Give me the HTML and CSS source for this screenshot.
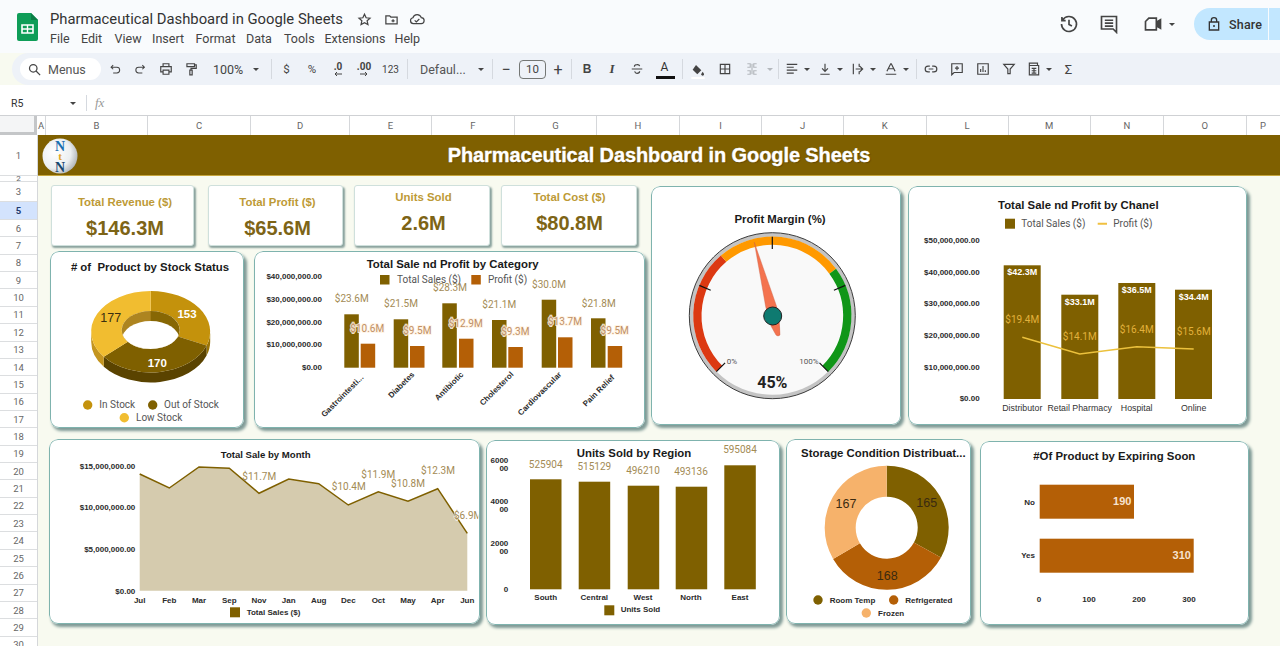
FILE: index.html
```html
<!DOCTYPE html>
<html lang="en">
<head>
<meta charset="utf-8">
<title>Pharmaceutical Dashboard in Google Sheets</title>
<link rel="stylesheet" href="styles.css">
</head>
<body>
<div class="app">
  <header class="topbar">
    <svg class="logo" viewBox="0 0 21 28"><path d="M2 0h12l7 7v19a2 2 0 0 1-2 2H2a2 2 0 0 1-2-2V2a2 2 0 0 1 2-2z" fill="#0f9d58"/><path d="M14 0l7 7h-7z" fill="#0b7d46"/><path d="M5 12h11v8H5z" fill="none" stroke="#fff" stroke-width="1.6"/><path d="M5 16h11M10.5 12v8" stroke="#fff" stroke-width="1.4"/></svg>
    <div class="docinfo">
      <div class="docline">
        <span class="doctitle">Pharmaceutical Dashboard in Google Sheets</span>
        <svg class="ico star" viewBox="0 0 24 24"><path d="M12 3.5l2.6 5.7 6.2.7-4.6 4.2 1.3 6.1L12 17.1l-5.5 3.1 1.3-6.1-4.6-4.2 6.2-.7z" fill="none" stroke="#444" stroke-width="2"/></svg>
        <svg class="ico move" viewBox="0 0 24 24"><path d="M3 6h6l2 2h10v11H3z M12 14h5M14.500 11.500v5" fill="none" stroke="#444" stroke-width="2"/></svg>
        <svg class="ico cloud" viewBox="0 0 24 24"><path d="M6.500 19a4.500 4.500 0 0 1-.6-8.900A6.500 6.500 0 0 1 18.400 10a4.500 4.500 0 0 1-.4 9z M8.500 14l2.500 2.500 4.500-4.500" fill="none" stroke="#444" stroke-width="1.800"/></svg>
      </div>
      <nav class="menu"><span class="m-file">File</span><span class="m-edit">Edit</span><span class="m-view">View</span><span class="m-insert">Insert</span><span class="m-format">Format</span><span class="m-data">Data</span><span class="m-tools">Tools</span><span class="m-ext">Extensions</span><span>Help</span></nav>
    </div>
    <div class="actions">
      <svg class="ico-lg hist" viewBox="0 0 24 24"><path d="M4.500 7A9 9 0 1 1 3 12 M3.500 3.500V8H8 M12 7v5.500l3.500 2" fill="none" stroke="#444" stroke-width="2"/></svg>
      <svg class="ico-lg cmt" viewBox="0 0 24 24"><path d="M3 3h18v19l-4-4H3z M7 7.500h10M7 11h10M7 14.500h10" fill="none" stroke="#444" stroke-width="2"/></svg>
      <svg class="ico-lg cam" viewBox="0 0 24 24"><path d="M7 5h9v14H3V9z M16 10l5-3v10l-5-3" fill="none" stroke="#444" stroke-width="2"/><path d="M16 10l5-3v10l-5-3z" fill="#444"/></svg>
      <i class="caret cam-caret"></i>
      <div class="share">
        <svg class="lock" viewBox="0 0 24 24"><path d="M5 9h14v12H5z M8 9V6.500a4 4 0 0 1 8 0V9" fill="none" stroke="#333" stroke-width="2"/><circle cx="12" cy="15" r="1.500" fill="#333"/></svg>
        <span>Share</span>
      </div>
      <div class="share-more"></div>
    </div>
  </header>

  <div class="toolbar">
    <div class="search">
      <svg class="ico" viewBox="0 0 24 24"><circle cx="10" cy="10" r="6" fill="none" stroke="#444" stroke-width="2"/><path d="M14.500 14.500L21 21" stroke="#444" stroke-width="2"/></svg>
      <span>Menus</span>
    </div>
    <span class="ti"><svg class="ico sm" viewBox="0 0 24 24"><path d="M4 8h11a5 5 0 0 1 0 11H8 M8 4L4 8l4 4" fill="none" stroke="#444" stroke-width="2"/></svg></span>
    <span class="ti"><svg class="ico sm" viewBox="0 0 24 24"><path d="M20 8H9a5 5 0 0 0 0 11h7 M16 4l4 4-4 4" fill="none" stroke="#444" stroke-width="2"/></svg></span>
    <span class="ti"><svg class="ico" viewBox="0 0 24 24"><path d="M7 8V3h10v5 M7 17H3V8h18v9h-4 M7 14h10v7H7z" fill="none" stroke="#444" stroke-width="2"/></svg></span>
    <span class="ti"><svg class="ico" viewBox="0 0 24 24"><path d="M5 3h13v5H5z M18 5h3v6h-9v3 M10 14h4v8h-4z" fill="none" stroke="#444" stroke-width="2"/></svg></span>
    <span class="zoomsel">100%<i class="caret"></i></span>
    <i class="sep"></i>
    <span class="ti t-txt w25">$</span>
    <span class="ti t-txt w26">%</span>
    <span class="ti t-txt w26 t-dec">.0<svg viewBox="0 0 10 6"><path d="M9 3H2M4 1L2 3l2 2" fill="none" stroke="#444" stroke-width="1"/></svg></span>
    <span class="ti t-txt w26 t-dec">.00<svg viewBox="0 0 10 6"><path d="M1 3h7M6 1l2 2-2 2" fill="none" stroke="#444" stroke-width="1"/></svg></span>
    <span class="ti t-txt w27 t-123">123</span>
    <i class="sep s3"></i>
    <span class="fontsel">Defaul...<i class="caret"></i></span>
    <i class="sep s0"></i>
    <span class="ti w26 t-pm">−</span>
    <span class="sizebox">10</span>
    <span class="ti w24 t-pm">+</span>
    <i class="sep s1"></i>
    <span class="ti t-b">B</span>
    <span class="ti t-i">I</span>
    <span class="ti"><svg class="ico" viewBox="0 0 24 24"><path d="M3 12h18 M16.500 7a4 3 0 0 0-4.500-2.500C9 4.500 7.500 6 7.500 8 M8 16c.500 2 2 3.500 4 3.500 2.500 0 4.500-1.500 4.500-3.500" fill="none" stroke="#444" stroke-width="2"/></svg></span>
    <span class="ti w30 t-color">A<i class="bar"></i></span>
    <i class="sep s2"></i>
    <span class="ti w30"><svg class="ico fillc" viewBox="0 0 24 24"><path d="M9 3l8 8-6 6-7-7z" fill="#444"/><path d="M19 13c1.500 2 2 3 2 4a2 2 0 0 1-4 0c0-1 .500-2 2-4z" fill="#444"/><path d="M2 22.500h20" stroke="#fff" stroke-width="3"/></svg></span>
    <span class="ti w25h"><svg class="ico" viewBox="0 0 24 24"><path d="M4 4h16v16H4z M12 4v16M4 12h16" fill="none" stroke="#444" stroke-width="2"/></svg></span>
    <span class="ti w27"><svg class="ico" viewBox="0 0 24 24"><path d="M4 3h5v6H4 M20 3h-5v6h5 M4 21h5v-6H4 M20 21h-5v-6h5 M12 3v18" fill="none" stroke="#b4b8bd" stroke-width="2"/></svg></span>
    <span class="ti w9"><i class="caret light"></i></span>
    <i class="sep s4"></i>
    <span class="ddi"><svg class="ico" viewBox="0 0 24 24"><path d="M3 4h18M3 9h12M3 14h18M3 19h12" stroke="#444" stroke-width="2"/></svg><i class="caret"></i></span>
    <span class="ddi"><svg class="ico" viewBox="0 0 24 24"><path d="M12 3v13M7 11l5 5 5-5 M4 21h16" fill="none" stroke="#444" stroke-width="2"/></svg><i class="caret"></i></span>
    <span class="ddi"><svg class="ico" viewBox="0 0 24 24"><path d="M4 3v18 M8 12h12M15 7l5 5-5 5 M14 3v5M14 16v5" fill="none" stroke="#444" stroke-width="2"/></svg><i class="caret"></i></span>
    <span class="ddi"><svg class="ico" viewBox="0 0 24 24"><path d="M5 16L11.500 3h1L19 16 M7.500 11.500h9 M3 21h18" fill="none" stroke="#444" stroke-width="2"/></svg><i class="caret"></i></span>
    <i class="sep s5"></i>
    <span class="ti w28"><svg class="ico" viewBox="0 0 24 24"><path d="M10 7H7a5 5 0 0 0 0 10h3 M14 7h3a5 5 0 0 1 0 10h-3 M8 12h8" fill="none" stroke="#444" stroke-width="2"/></svg></span>
    <span class="ti"><svg class="ico" viewBox="0 0 24 24"><path d="M3 3h18v15H7l-4 4z M12 7v7M8.500 10.500h7" fill="none" stroke="#444" stroke-width="2"/></svg></span>
    <span class="ti w27"><svg class="ico" viewBox="0 0 24 24"><path d="M3 3h18v18H3z M8 17v-5M12 17V7M16 17v-3" fill="none" stroke="#444" stroke-width="2"/></svg></span>
    <span class="ti"><svg class="ico" viewBox="0 0 24 24"><path d="M3 4h18l-7 8v8h-4v-8z" fill="none" stroke="#444" stroke-width="2"/></svg></span>
    <span class="ddi fn"><svg class="ico" viewBox="0 0 24 24"><path d="M4 6V2h14v4 M4 6h16v16H4z M8 11h8M8 15h8M8 19h8M12 11v8" fill="none" stroke="#444" stroke-width="2"/></svg><i class="caret"></i></span>
    <span class="ti w26 t-sigma">Σ</span>
  </div>

  <div class="formula">
    <span class="cellref">R5</span><i class="caret"></i><i class="sep fsep"></i><span class="fx">fx</span>
  </div>

  <div class="colheads">
    <span class="corner"></span>
    <span class="c-a">A</span><span class="c-b">B</span><span class="c-c">C</span><span class="c-d">D</span><span class="c-e">E</span><span class="c-f">F</span><span class="c-g">G</span><span class="c-h">H</span><span class="c-i">I</span><span class="c-j">J</span><span class="c-k">K</span><span class="c-l">L</span><span class="c-m">M</span><span class="c-n">N</span><span class="c-o">O</span><span class="c-p">P</span>
  </div>

  <div class="sheet">
    <div class="rowheads">
      <span class="r1">1</span><span class="r2">2</span><span class="r3">3</span><span class="r5">5</span><span>6</span><span>7</span><span>8</span><span>9</span><span>10</span><span>11</span><span>12</span><span>13</span><span>14</span><span>15</span><span>16</span><span>17</span><span>18</span><span>19</span><span>20</span><span>21</span><span>22</span><span>23</span><span>24</span><span>25</span><span>26</span><span>27</span><span>28</span><span>29</span><span>30</span>
    </div>
    <main class="canvas">
      <div class="band">
        <svg class="ntn" viewBox="0 0 36 36">
          <defs><radialGradient id="ball" cx="35%" cy="40%" r="75%"><stop offset="0" stop-color="#fff"/><stop offset="0.6" stop-color="#eceff1"/><stop offset="1" stop-color="#9ea3a8"/></radialGradient></defs>
          <circle cx="18" cy="18" r="17.500" fill="url(#ball)"/>
          <text class="ntn-n" x="18" y="12.500">N</text><text class="ntn-t" x="18" y="22">t</text><text class="ntn-b" x="18" y="34">N</text>
        </svg>
        <h1>Pharmaceutical Dashboard in Google Sheets</h1>
      </div>

      <div class="top-row">
        <div class="left-block">
          <div class="kpis">
            <div class="kpi kpi-1"><span class="kpi-label">Total Revenue ($)</span><span class="kpi-value">$146.3M</span></div>
            <div class="kpi kpi-2"><span class="kpi-label">Total Profit ($)</span><span class="kpi-value">$65.6M</span></div>
            <div class="kpi kpi-3 high"><span class="kpi-label">Units Sold</span><span class="kpi-value">2.6M</span></div>
            <div class="kpi kpi-4 high"><span class="kpi-label">Total Cost ($)</span><span class="kpi-value">$80.8M</span></div>
          </div>
          <div class="chart-row">
            <section class="card stock">
              <svg viewBox="0 0 194 177">
                <text class="title t12 mid" x="100" y="20"># of  Product by Stock Status</text>
                <path d="M160.200 80.700V90.700A59.500 40.700 0 0 1 156.600 104.600V94.600A59.500 40.700 0 0 0 160.200 80.700Z" fill="#9a7406"/>
                <path d="M156.600 94.600V104.600A59.500 40.700 0 0 1 53.800 115.760V105.760A59.500 40.700 0 0 0 156.600 94.600Z" fill="#5a4300"/>
                <path d="M53.800 105.760V115.760A59.500 40.700 0 0 1 41.200 90.700V80.700A59.500 40.700 0 0 0 53.800 105.760Z" fill="#c4951f"/>
                <path d="M100.700 40A59.500 40.700 0 0 1 156.600 94.600L127.950 85.500A29 19 0 0 0 100.700 60Z" fill="#c4920c"/>
                <path d="M156.600 94.600A59.500 40.700 0 0 1 53.800 105.760L77.850 90.700A29 19 0 0 0 127.950 85.500Z" fill="#7f6000"/>
                <path d="M53.800 105.760A59.500 40.700 0 0 1 100.700 40L100.700 60A29 19 0 0 0 77.850 90.700Z" fill="#f1bd30"/>
                <defs><clipPath id="hole"><ellipse cx="100.700" cy="79" rx="29" ry="19"/></clipPath></defs>
                <g clip-path="url(#hole)">
                  <rect x="71" y="60" width="30" height="40" fill="#ad8420"/>
                  <rect x="100.700" y="60" width="30" height="40" fill="#876704"/>
                  <ellipse cx="100.700" cy="89" rx="29" ry="19" fill="#fff"/>
                </g>
                <text class="pie-l white mid" x="137" y="67">153</text>
                <text class="pie-l dark mid" x="60.700" y="71">177</text>
                <text class="pie-l white mid" x="107.300" y="116">170</text>
                <circle cx="37.700" cy="154" r="4.700" fill="#c4920c"/><text class="leg" x="49.300" y="157">In Stock</text>
                <circle cx="102.700" cy="154" r="4.700" fill="#7f6000"/><text class="leg" x="114" y="157">Out of Stock</text>
                <circle cx="74.300" cy="166.700" r="4.700" fill="#f1bd30"/><text class="leg" x="86" y="170">Low Stock</text>
              </svg>
            </section>
            <section class="card category">
              <svg viewBox="0 0 391 177">
                <text class="title t12 mid" x="198.700" y="16.500">Total Sale nd Profit by Category</text>
                <rect x="126" y="24" width="9.500" height="9.500" fill="#7f6000"/><text class="leg" x="143" y="32">Total Sales ($)</text>
                <rect x="217.300" y="24" width="9.500" height="9.500" fill="#b45f06"/><text class="leg" x="234" y="32">Profit ($)</text>
                <g class="axis end">
                  <text x="68" y="28">$40,000,000.00</text><text x="68" y="51">$30,000,000.00</text><text x="68" y="73.700">$20,000,000.00</text><text x="68" y="96.300">$10,000,000.00</text><text x="68" y="119">$0.00</text>
                </g>
                <g fill="#7f6000">
                  <rect x="90.300" y="63.300" width="14.500" height="53.400"/><rect x="139.700" y="68.300" width="14.500" height="48.400"/><rect x="188.300" y="52.300" width="14.500" height="64.400"/><rect x="238" y="69" width="14.500" height="47.700"/><rect x="287.700" y="48.700" width="14.500" height="68"/><rect x="337" y="67.300" width="14.500" height="49.400"/>
                </g>
                <g fill="#b45f06">
                  <rect x="106.700" y="92.700" width="14.500" height="24"/><rect x="156" y="95" width="14.500" height="21.700"/><rect x="205" y="87.700" width="14.500" height="29"/><rect x="254.300" y="96" width="14.500" height="20.700"/><rect x="304" y="86.300" width="14.500" height="30.400"/><rect x="353.700" y="95" width="14.500" height="21.700"/>
                </g>
                <g class="dl sale mid">
                  <text x="97.700" y="51.200">$23.6M</text><text x="147" y="56.200">$21.5M</text><text x="196" y="40.200">$28.3M</text><text x="245.300" y="57.200">$21.1M</text><text x="295" y="36.800">$30.0M</text><text x="344.700" y="55.500">$21.8M</text>
                </g>
                <g class="dl profit mid">
                  <text x="113.300" y="80.800">$10.6M</text><text x="163.300" y="83.200">$9.5M</text><text x="211.700" y="76.200">$12.9M</text><text x="261.300" y="83.800">$9.3M</text><text x="311" y="73.500">$13.7M</text><text x="360.700" y="83.200">$9.5M</text>
                </g>
                <g class="axis rot end">
                  <text transform="translate(110 127) rotate(-45)">Gastrointesti...</text>
                  <text transform="translate(161 124) rotate(-45)">Diabetes</text>
                  <text transform="translate(210 124) rotate(-45)">Antibiotic</text>
                  <text transform="translate(260 124) rotate(-45)">Cholesterol</text>
                  <text transform="translate(308 124) rotate(-45)">Cardiovascular</text>
                  <text transform="translate(361 127) rotate(-45)">Pain Relief</text>
                </g>
              </svg>
            </section>
          </div>
        </div>
        <section class="card gauge">
          <svg viewBox="0 0 250 239">
            <text class="title t12 mid" x="129" y="37">Profit Margin (%)</text>
            <circle cx="121.300" cy="129.700" r="83" fill="#c4c4c4" stroke="#3c3c3c" stroke-width="1"/>
            <circle cx="121.300" cy="129.700" r="79" fill="#f9f9f9"/>
            <path d="M68.300 182.700A75 75 0 0 1 72.600 72.700" class="arc" stroke="#dc3912"/>
            <path d="M72.600 72.700A75 75 0 0 1 181.700 85.200" class="arc" stroke="#ff9900"/>
            <path d="M181.700 85.200A75 75 0 0 1 174.300 182.700" class="arc" stroke="#109618"/>
            <path class="tick" d="M121.300 50.700V63M48.300 99.400L59.700 104.200M194.300 99.400L182.900 104.200M65.400 185.600L74.100 176.900M177.200 185.600L168.500 176.900"/>
            <path d="M103.300 56.300L125.700 120.700Q129 134 129 149Q127 151 125 149L120 140L114.700 120.700Z" fill="#f4734f" stroke="#c9634a" stroke-width=".4"/>
            <circle cx="121.700" cy="130" r="9" fill="#0e7a70" stroke="#222" stroke-width="1"/>
            <text class="pct mid" x="81" y="178">0%</text>
            <text class="pct mid" x="158" y="178">100%</text>
            <text class="gauge-v mid" x="121.300" y="201.500">45%</text>
          </svg>
        </section>
        <section class="card channel">
          <svg viewBox="0 0 339 239">
            <text class="title t12 mid" x="170.300" y="23">Total Sale nd Profit by Chanel</text>
            <rect x="97" y="32.700" width="10" height="10" fill="#7f6000"/><text class="leg" x="113.300" y="41">Total Sales ($)</text>
            <path d="M189.700 37.700H199" stroke="#f0c040" stroke-width="2"/><text class="leg" x="205.300" y="41">Profit ($)</text>
            <g class="axis end">
              <text x="71.700" y="57">$50,000,000.00</text><text x="71.700" y="88.700">$40,000,000.00</text><text x="71.700" y="120.300">$30,000,000.00</text><text x="71.700" y="152">$20,000,000.00</text><text x="71.700" y="183.700">$10,000,000.00</text><text x="71.700" y="215.300">$0.00</text>
            </g>
            <g fill="#7f6000">
              <rect x="95.700" y="79.300" width="37" height="133.700"/><rect x="153.300" y="108.700" width="37" height="104.300"/><rect x="210.300" y="97" width="37" height="116"/><rect x="267" y="103.700" width="37" height="109.300"/>
            </g>
            <g class="bar-l mid">
              <text x="114.300" y="89.300">$42.3M</text><text x="171.700" y="119">$33.1M</text><text x="228.700" y="107.300">$36.5M</text><text x="285.700" y="114.300">$34.4M</text>
            </g>
            <g class="dl line mid">
              <text x="114.300" y="137.200">$19.4M</text><text x="171.700" y="153.500">$14.1M</text><text x="228.700" y="146.500">$16.4M</text><text x="285.700" y="148.500">$15.6M</text>
            </g>
            <path d="M114.300 151.300L171.700 168L228.700 160.700L285.700 163" fill="none" stroke="#ecc13c" stroke-width="1.500"/>
            <g class="cat mid">
              <text x="114.300" y="224.500">Distributor</text><text x="171.700" y="224.500">Retail Pharmacy</text><text x="228.700" y="224.500">Hospital</text><text x="285.700" y="224.500">Online</text>
            </g>
          </svg>
        </section>
      </div>

      <div class="bottom-row">
        <section class="card month">
          <svg viewBox="0 0 431 185">
            <defs><clipPath id="plot"><rect x="0" y="0" width="429.300" height="185"/></clipPath></defs>
            <text class="title t105 mid" x="216.700" y="18.500">Total Sale by Month</text>
            <g class="axis end">
              <text x="86.300" y="30">$15,000,000.00</text><text x="86.300" y="71.300">$10,000,000.00</text><text x="86.300" y="113">$5,000,000.00</text><text x="86.300" y="154.700">$0.00</text>
            </g>
            <path d="M90.700 35L120.300 49L150 28L180.300 29.300L210 54.300L239.700 40L269.700 44.700L299.300 66L329.300 52.700L359 62.300L388.700 49.700L418.300 94.300V151.700H90.700Z" fill="#d5cbae"/>
            <path d="M90.700 35L120.300 49L150 28L180.300 29.300L210 54.300L239.700 40L269.700 44.700L299.300 66L329.300 52.700L359 62.300L388.700 49.700L418.300 94.300" fill="none" stroke="#7f6000" stroke-width="1.500"/>
            <g class="dl sale mid">
              <text x="210.300" y="40.500">$11.7M</text><text x="299.700" y="51.200">$10.4M</text><text x="329.300" y="38.500">$11.9M</text><text x="359" y="48.200">$10.8M</text><text x="389" y="35.200">$12.3M</text>
            </g>
            <g clip-path="url(#plot)"><text class="dl sale halo" x="405" y="80.200">$6.9M</text></g>
            <g class="axis mid">
              <text x="90.700" y="163.500">Jul</text><text x="120.300" y="163.500">Feb</text><text x="150" y="163.500">Mar</text><text x="180.300" y="163.500">Sep</text><text x="210" y="163.500">Nov</text><text x="239.700" y="163.500">Jan</text><text x="269.700" y="163.500">Aug</text><text x="299.300" y="163.500">Dec</text><text x="329.300" y="163.500">Oct</text><text x="359" y="163.500">May</text><text x="388.700" y="163.500">Apr</text><text x="418.300" y="163.500">Jun</text>
            </g>
            <rect x="181" y="168.300" width="10" height="10" fill="#7f6000"/><text class="axis" x="197.700" y="176">Total Sales ($)</text>
          </svg>
        </section>
        <section class="card region">
          <svg viewBox="0 0 294 185">
            <text class="title t12 mid" x="148" y="16.500">Units Sold by Region</text>
            <g class="axis end">
              <text x="22.300" y="22.700">6000</text><text x="22.300" y="30.700">00</text><text x="22.300" y="64">4000</text><text x="22.300" y="72">00</text><text x="22.300" y="106.300">2000</text><text x="22.300" y="114">00</text><text x="22.300" y="152">0</text>
            </g>
            <g fill="#7f6000">
              <rect x="44" y="39.300" width="31.500" height="110"/><rect x="92.700" y="41.700" width="31.500" height="107.600"/><rect x="141.700" y="45.700" width="31.500" height="103.600"/><rect x="189.700" y="46.700" width="31.500" height="102.600"/><rect x="238.300" y="25.300" width="31.500" height="124"/>
            </g>
            <g class="dl sale mid">
              <text x="59.700" y="27.800">525904</text><text x="108.300" y="29.800">515129</text><text x="157" y="34.200">496210</text><text x="205" y="34.800">493136</text><text x="254" y="13.200">595084</text>
            </g>
            <g class="axis mid">
              <text x="59.700" y="160">South</text><text x="108.300" y="160">Central</text><text x="157" y="160">West</text><text x="205" y="160">North</text><text x="254" y="160">East</text>
            </g>
            <rect x="118.300" y="165.300" width="10" height="10" fill="#7f6000"/><text class="axis" x="134.700" y="172.300">Units Sold</text>
          </svg>
        </section>
        <section class="card storage">
          <svg viewBox="0 0 185 185">
            <text class="title t12 mid" x="97.300" y="18">Storage Condition Distribuat...</text>
            <path d="M100.700 26.700A62 62 0 0 1 155 118.600L127.900 103.600A31 31 0 0 0 100.700 57.700Z" fill="#7f6000"/>
            <path d="M155 118.600A62 62 0 0 1 47.100 119.900L73.900 104.300A31 31 0 0 0 127.900 103.600Z" fill="#b45f06"/>
            <path d="M47.100 119.900A62 62 0 0 1 100.700 26.700V57.700A31 31 0 0 0 73.900 104.300Z" fill="#f6b26b"/>
            <g class="pie-n mid">
              <text x="140.700" y="68">165</text><text x="101.300" y="140.500">168</text><text x="60" y="69">167</text>
            </g>
            <circle cx="32" cy="161" r="4.700" fill="#7f6000"/><text class="axis" x="43.700" y="163.500">Room Temp</text>
            <circle cx="107.700" cy="161" r="4.700" fill="#b45f06"/><text class="axis" x="119.300" y="163.500">Refrigerated</text>
            <circle cx="80.300" cy="174" r="4.700" fill="#f6b26b"/><text class="axis" x="92" y="177">Frozen</text>
          </svg>
        </section>
        <section class="card expiring">
          <svg viewBox="0 0 269 184">
            <text class="title t12 mid" x="134.300" y="19">#Of Product by Expiring Soon</text>
            <rect x="59.700" y="43.700" width="94.300" height="34" fill="#b45f06"/>
            <rect x="59.700" y="97.700" width="154" height="34" fill="#b45f06"/>
            <text class="exp-v mid" x="142.300" y="64">190</text><text class="exp-v mid" x="201.700" y="118">310</text>
            <g class="axis end"><text x="55" y="64">No</text><text x="55" y="117">Yes</text></g>
            <g class="axis mid"><text x="59" y="161">0</text><text x="109" y="161">100</text><text x="159" y="161">200</text><text x="209" y="161">300</text></g>
          </svg>
        </section>
      </div>
    </main>
  </div>
</div>
</body>
</html>
```

FILE: styles.css
```css
* { box-sizing: border-box; }
html, body { margin: 0; padding: 0; }
body { width: 1280px; height: 646px; overflow: hidden; background: #f8faf0; font-family: Roboto, "Liberation Sans", sans-serif; color: #444; }
.app { display: flex; flex-direction: column; width: 1280px; height: 646px; overflow: hidden; }

/* title bar */
.topbar { display: flex; height: 53px; background: #f9fbfd; flex: none; padding-left: 17px; }
.logo { width: 21px; height: 28px; margin-top: 13px; flex: none; }
.docinfo { margin-left: 12px; padding-top: 10px; flex: none; }
.docline { display: flex; align-items: center; height: 18px; }
.doctitle { font-size: 14.8px; color: #333; width: 307px; white-space: nowrap; }
.ico { width: 14px; height: 14px; display: block; flex: none; }
.ico.sm { width: 12.500px; height: 12.500px; }
.ico.fillc { width: 16px; height: 16px; margin-top: 3px; }
.search .ico { width: 15px; height: 15px; }
.docline .ico { width: 16px; height: 16px; }
.docline .star { width: 15px; height: 15px; }
.docline .move { margin-left: 12px; width: 15px; height: 15px; }
.cloud { margin-left: 10px; }
.menu { display: flex; font-size: 12.5px; color: #444; margin-top: 2px; height: 16px; align-items: center; }
.menu .m-file { width: 31px; }
.menu .m-edit { width: 33.500px; }
.menu .m-view { width: 37.500px; }
.menu .m-insert { width: 43.500px; }
.menu .m-format { width: 50.500px; }
.menu .m-data { width: 38px; }
.menu .m-tools { width: 40.500px; }
.menu .m-ext { width: 70px; }
.actions { margin-left: auto; display: flex; align-items: center; height: 48px; }
.ico-lg { width: 20px; height: 20px; display: block; flex: none; }
.cmt { margin-left: 20px; }
.cam { margin-left: 24px; }
.cam-caret { margin-left: 6px; }
.share { margin-left: 19px; width: 74px; height: 32px; background: #c2e7ff; border-radius: 16px 0 0 16px; display: flex; align-items: center; padding-left: 12px; gap: 7px; font-size: 12.500px; font-weight: 500; color: #333; letter-spacing: .2px; }
.lock { width: 16px; height: 16px; }
.share-more { width: 11px; height: 32px; margin-left: 1px; background: #c2e7ff; }

/* toolbar */
.toolbar { display: flex; align-items: center; height: 32px; flex: none; margin-left: 12px; background: #eef2f8; border-radius: 16px 0 0 16px; }
.search { display: flex; align-items: center; margin-left: 8px; margin-right: 2px; width: 81px; height: 22px; background: #fff; border-radius: 11px; padding-left: 7px; gap: 6px; font-size: 12.500px; color: #555; flex: none; }
.ti { width: 25px; height: 22px; display: flex; align-items: center; justify-content: center; flex: none; color: #444; }
.w9 { width: 9px; } .w24 { width: 24px; } .w25 { width: 25px; } .w25h { width: 25.500px; } .w26 { width: 26px; } .w27 { width: 27px; } .w28 { width: 28px; } .w30 { width: 30px; }
.caret { display: block; width: 0; height: 0; border-left: 3.500px solid transparent; border-right: 3.500px solid transparent; border-top: 3.500px solid #444; flex: none; }
.caret.light { border-top-color: #b4b8bd; }
.sep { display: block; width: 1px; height: 20px; background: #d5d9df; margin: 0 2px; flex: none; }
.zoomsel { width: 66px; padding-left: 10px; display: flex; align-items: center; gap: 10px; font-size: 12.500px; flex: none; }
.t-txt { font-size: 11.500px; color: #444; }
.t-dec { flex-direction: column; font-size: 10px; line-height: 9px; font-weight: 700; }
.t-dec svg { width: 10px; height: 6px; display: block; }
.t-123 { font-size: 10px; }
.s3 { margin: 0 0 0 3px; }
.fontsel { width: 84px; padding-left: 12px; display: flex; align-items: center; gap: 12px; font-size: 12.500px; flex: none; color: #555; }
.s0 { margin: 0; }
.t-pm { font-size: 16px; }
.sizebox { width: 27px; height: 19px; border: 1px solid #747775; border-radius: 4px; font-size: 11.500px; display: flex; align-items: center; justify-content: center; flex: none; }
.s1 { margin: 0 2.500px 0 1px; }
.t-b { font-family: "Liberation Sans", sans-serif; font-weight: 700; font-size: 12px; }
.t-i { font-family: "Liberation Serif", serif; font-style: italic; font-weight: 700; font-size: 13px; }
.t-color { position: relative; font-size: 12px; padding-bottom: 5px; color: #333; }
.bar { position: absolute; left: 6px; right: 5px; bottom: 1px; height: 3px; background: #111; }
.s2 { margin: 0 0 0 2px; }
.s4 { margin: 0 0 0 3.500px; }
.s5 { margin: 0 0 0 5px; }
.ddi { display: flex; align-items: center; gap: 5px; width: 33px; padding-left: 6px; flex: none; }
.ddi.fn { margin-left: -1px; width: 35px; }
.t-sigma { font-size: 13px; }

/* formula bar */
.formula { display: flex; align-items: center; height: 30px; background: #fff; flex: none; padding: 6px 0 0 11px; font-size: 10.500px; color: #333; }
.cellref { width: 59px; }
.fsep { margin: 0 0 0 10px; height: 16px; }
.fx { font-family: "Liberation Serif", serif; font-style: italic; font-size: 13px; color: #999; margin-left: 8px; }

/* column heads */
.colheads { display: flex; height: 20px; flex: none; background: #fff; border-top: 1px solid #cfd1d4; font-size: 9.500px; color: #666; }
.colheads span { display: flex; align-items: center; justify-content: center; border-right: 1px solid #d5d7da; flex: none; height: 19px; }
.colheads .corner { width: 37px; background: #f4f5f6; border-right: 3px solid #c4c6c8; border-bottom: 3px solid #c4c6c8; }
.c-a { width: 9px; } .c-b { width: 102px; } .c-c { width: 103px; } .c-d { width: 99px; } .c-e { width: 82px; } .c-f { width: 83px; } .c-g { width: 82px; } .c-h { width: 83px; } .c-i { width: 82px; } .c-j { width: 82px; } .c-k { width: 82.500px; } .c-l { width: 82px; } .c-m { width: 82.500px; } .c-n { width: 73px; } .c-o { width: 82.500px; } .c-p { width: 34px; }

/* sheet */
.sheet { display: flex; flex: 1; min-height: 0; }
.rowheads { width: 38px; flex: none; display: flex; flex-direction: column; background: #fff; border-right: 1px solid #d5d7da; font-size: 9.500px; color: #666; }
.rowheads span { height: 17.360px; flex: none; display: flex; align-items: center; justify-content: center; border-bottom: 1px solid #dcdee0; }
.rowheads .r1 { height: 41px; }
.rowheads .r2 { height: 6px; overflow: hidden; font-size: 8px; }
.rowheads .r3 { height: 20px; }
.rowheads .r5 { height: 18px; background: #d3e3fd; font-weight: 700; color: #1f3a6e; }
.canvas { flex: 1; min-width: 0; background: #f8faf0; }

.band { height: 41px; background: #7f6000; border-bottom: 1px solid #c6a63e; display: flex; align-items: center; justify-content: center; position: relative; }
.band h1 { margin: 0; font-family: "Liberation Sans", sans-serif; font-weight: 700; font-size: 20px; color: #fff; white-space: nowrap; letter-spacing: -.1px; -webkit-text-stroke: .35px #fff; text-shadow: 1px 1px 1px rgba(60,40,0,.45); }
.ntn { position: absolute; left: 4px; top: 3px; width: 36px; height: 36px; }
.ntn text { font-family: "Liberation Serif", serif; font-weight: 700; text-anchor: middle; }
.ntn-n { font-size: 14px; fill: #1a6fb0; }
.ntn-t { font-size: 11px; fill: #e0a526; }
.ntn-b { font-size: 14px; fill: #17476f; }

.top-row { display: flex; margin-top: 9px; }
.left-block { width: 595px; margin-left: 12px; flex: none; }
.kpis { display: flex; height: 61px; margin-left: 1px; }
.kpi { width: 136px; height: 61px; margin-left: 11px; flex: none; background: #fff; border-radius: 3px; border: 1px solid #cfe0dc; box-shadow: 1.500px 2px 2px #8aa29d; display: flex; flex-direction: column; align-items: center; font-family: "Liberation Sans", sans-serif; font-weight: 700; padding-top: 9px; }
.kpi-1 { width: 143px; margin-left: 0; padding-left: 5px; }
.kpi-2 { width: 135px; margin-left: 14px; padding-left: 4px; }
.kpi-3 { padding-left: 3px; }
.kpi-4 { padding-left: 1px; }
.high { padding-top: 4px; }
.kpi-label { font-size: 11.400px; line-height: 14px; color: #bd9a36; }
.kpi-value { font-size: 20px; line-height: 24px; margin-top: 7px; color: #7d6416; }
.chart-row { display: flex; gap: 10px; margin-top: 5px; }

.card { position: relative; flex: none; background: #fff; border-radius: 9px; box-shadow: 2.500px 3px 3px #7f9a96; overflow: hidden; }
.card::after { content: ""; position: absolute; inset: 0; border: 1px solid #7fb3ae; border-radius: 9px; pointer-events: none; }
.card svg { display: block; width: 100%; height: 100%; }
.stock { width: 194px; height: 177px; }
.category { width: 391px; height: 177px; }
.gauge { width: 250px; height: 239px; margin-left: 6px; margin-top: 1px; }
.channel { width: 339px; height: 239px; margin-left: 7px; margin-top: 1px; }
.bottom-row { display: flex; margin-top: 11px; }
.month { width: 431px; height: 185px; margin-left: 11px; }
.region { width: 294px; height: 185px; margin-left: 6px; margin-top: 1px; }
.storage { width: 185px; height: 185px; margin-left: 6px; }
.expiring { width: 269px; height: 184px; margin-left: 9px; margin-top: 2px; }

/* chart text */
.card text { font-family: "Liberation Sans", sans-serif; }
.mid, .mid text { text-anchor: middle; }
.end text, text.end { text-anchor: end; }
.title { font-weight: 700; fill: #1a1a1a; white-space: pre; }
.t12 { font-size: 11.400px; }
.t105 { font-size: 9.600px; }
.leg { font-size: 10px; fill: #555; }
.card .leg { font-family: Roboto, sans-serif; }
.axis text, text.axis { font-size: 8px; font-weight: 700; fill: #2b2b2b; }
.pie-l { font-size: 12.500px; }
.pie-l.white { font-size: 11.500px; }
.white { fill: #fff; font-weight: 700; }
.dark { fill: #3a2f10; }
.dl text, text.dl { font-size: 10px; }
.card .dl text, .card text.dl { font-family: Roboto, sans-serif; }
.sale text, text.sale { fill: #a38b55; }
.halo { paint-order: stroke; stroke: rgba(255,255,255,.8); stroke-width: 1.500px; }
.profit text { fill: #c08f66; paint-order: stroke; stroke: rgba(255,243,226,.9); stroke-width: 2px; }
.line text { fill: #e2b13c; }
.bar-l text { font-size: 9px; font-weight: 700; fill: #fff; }
.cat text { font-size: 8.800px; fill: #333; }
.pie-n text { font-size: 12.500px; fill: #3a2a10; }
.exp-v { font-size: 11px; font-weight: 700; fill: #f7e3cf; }
.arc { fill: none; stroke-width: 8.300px; }
.tick { stroke: #111; stroke-width: 1.200px; fill: none; }
.pct { font-size: 8px; fill: #555; }
.card .pct, .card .gauge-v { font-family: Roboto, sans-serif; }
.gauge-v { font-size: 16px; font-weight: 700; fill: #222; }
```
